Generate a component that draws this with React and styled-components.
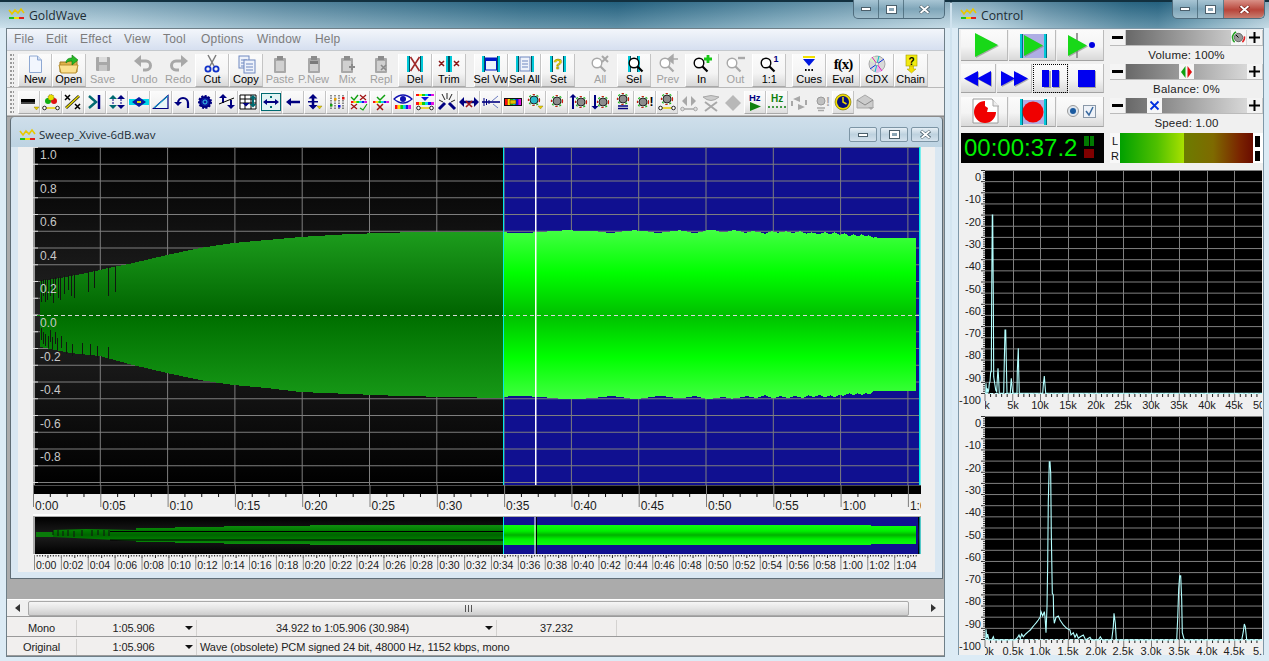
import React from 'react';
import styled, { createGlobalStyle } from 'styled-components';

const FONT = '"Liberation Sans", Arial, sans-serif';

const Global = createGlobalStyle`
  html, body { margin: 0; padding: 0; overflow: hidden; background: #a8c8d8; }
  * { box-sizing: border-box; }
`;

const Desktop = styled.div`
  width: 1269px; height: 661px; display: flex; overflow: hidden;
  font: 11px ${FONT}; color: #000;
  background: linear-gradient(180deg, #0d2b3d 0, #0d2b3d 2px, #cfe2ee 3px, #dcebf4 100%);
`;
const Glass = styled.div`
  display: flex; flex-direction: column; height: 661px;
  border-top: 2px solid #12303f;
  background:
    linear-gradient(180deg, rgba(255,255,255,0) 0, rgba(255,255,255,0) 26px, #dcebf5 26px),
    linear-gradient(180deg, rgba(10,60,90,.25) 0, rgba(255,255,255,.25) 26px),
    linear-gradient(90deg, #bcd8e6 0, #a6c8d8 12%, #6f9db3 30%, #35738f 55%, #2c6c8a 65%, #6ea0b6 82%, #b3d0de 100%);
`;
const MainWindow = styled(Glass)`width: 950px; padding: 0 5px 0 6px;`;
const ControlWindow = styled(Glass)`width: 317px; margin-left: 2px; padding: 0 5px 0 6px;`;
const TitleBar = styled.div`
  height: 26px; flex: none; display: flex; align-items: flex-start; gap: 4px;
  padding: 5px 0 0 2px; font: 12.2px "Open Sans", ${FONT}; color: #1c2c34;
  position: relative;
`;
const CaptionGroup = styled.div`
  position: absolute; top: -2px; right: ${p => p.$right}px; display: flex; height: 19px;
  border: 1px solid #4f6c7d; border-top: 0; border-radius: 0 0 5px 5px;
  background: linear-gradient(180deg, #a8c5d4, #7fa6b9 50%, #9dbccb);
`;
const CaptionBtn = styled.div`
  width: ${p => p.$w}px; display: flex; align-items: center; justify-content: center;
  border-right: 1px solid rgba(50,80,95,.6);
  background: ${p => p.$close ? 'linear-gradient(180deg,#d99187,#b8453a 55%,#c87e70)' : 'transparent'};
  &:last-child { border-right: 0; border-radius: 0 0 5px 0; }
`;
const Client = styled.div`
  height: 629px; flex: none; display: flex; flex-direction: column;
  background: #f0f0f0; border: 1px solid #6f7f88;
`;
const MenuBar = styled.div`
  height: 22px; flex: none; display: flex; align-items: center; padding: 0 0 1px 7px;
  background: linear-gradient(180deg, #f3f6fb 0, #e7edf6 40%, #d6dff0 100%);
  border-bottom: 1px solid #c4c8cc; font: 12px ${FONT}; color: #7c7c7c; letter-spacing: .2px;
`;
const MenuItem = styled.span`width: ${p => p.$w}px; flex: none;`;
const ToolRow = styled.div`
  flex: none; display: flex; height: ${p => p.$h}px; align-items: flex-start;
  padding-top: ${p => p.$top || 0}px; background: #f0f0f0; border-bottom: 1px solid #b9b9b9;
`;
const Gripper = styled.div`
  width: 4px; height: ${p => p.$h}px; margin: 0 4px 0 3px; flex: none;
  background-image: radial-gradient(circle at 1px 1px, #9a9a9a 1px, transparent 1.1px);
  background-size: 3px 4px;
`;
const ToolGroup = styled.div`display: flex; margin-left: ${p => p.$gap || 0}px; flex: none;`;
const BigBtn = styled.div`
  width: 33.83px; height: 33px; flex: none; display: flex; flex-direction: column; align-items: center;
  padding-top: 1px; font: 11px ${FONT}; white-space: nowrap; line-height: 13px;
  color: ${p => p.$off ? '#a0a0a0' : '#000'};
  ${p => p.$off ? '' : `
    background: linear-gradient(180deg, #fbfbfb 0, #f4f4f4 60%, #d8d8d8 100%);
    border-right: 1px solid #c4c4c4; border-bottom: 1px solid #a9a9a9; border-left: 1px solid #fff;
  `}
`;
const SmallBtn = styled.div`
  width: 22px; height: 23px; flex: none; display: flex; align-items: center; justify-content: center;
  ${p => p.$off ? '' : `
    background: linear-gradient(180deg, #fbfbfb 0, #f2f2f2 60%, #dcdcdc 100%);
    border-right: 1px solid #c4c4c4; border-bottom: 1px solid #a9a9a9; border-left: 1px solid #fff;
  `}
`;
const Glyph = styled.svg`display: block; flex: none; overflow: visible;`;
const BtnGlyph = styled(Glyph)`margin-bottom: 0;`;

const Mdi = styled.div`
  flex: 1; min-height: 0; display: flex; flex-direction: column; background: #ababab;
  border-top: 1px solid #8a8a8a; padding-left: 3px; padding-right: 1px;
`;
const Child = styled.div`
  height: 462px; flex: none; display: flex; flex-direction: column; border-radius: 4px 4px 0 0;
  padding: 0 7px 6px; border: 1px solid #5f6d76; border-width: 0 1px 1px 1px;
  background: linear-gradient(180deg, #cfdfeb 0, #bdd3e2 30px, #d9e7f2 30px);
`;
const ChildTitle = styled.div`
  height: 30px; flex: none; display: flex; align-items: center; gap: 3px; padding: 4px 0 0 1px;
  font: 11.5px "Open Sans", ${FONT}; color: #1c2c34; position: relative;
`;
const ChildCaps = styled.div`position: absolute; right: -4px; top: 10px; display: flex; gap: 3px;`;
const ChildCap = styled.div`
  width: 28px; height: 15px; display: flex; align-items: center; justify-content: center;
  border: 1px solid #7d95a5; border-radius: 2px;
  background: linear-gradient(180deg, #e6eff5, #bed2df 50%, #d4e2ec);
`;
const ChildClient = styled.div`
  flex: 1; min-height: 0; background: #f0f0f0; padding-left: 15px; display: flex; flex-direction: column;
`;
const Block = styled.svg`display: block; flex: none; font-family: ${FONT};`;
const Gap = styled.div`height: ${p => p.$h}px; flex: none; background: #fdfdfd; width: 888px;`;

const GrayStrip = styled.div`flex: 1; min-height: 0; background: #ababab;`;
const ScrollBar = styled.div`
  height: 18px; flex: none; display: flex; align-items: center; background: #f0f0f0;
  margin: 0 -1px 0 -3px; border-bottom: 1px solid #9a9a9a; border-top: 1px solid #fff;
`;
const ScrollArrow = styled.div`
  width: ${p => p.$w}px; flex: none; display: flex; justify-content: ${p => p.$end ? 'flex-end' : 'center'};
  padding-right: ${p => p.$end ? 8 : 0}px;
`;
const ScrollThumb = styled.div`
  flex: 1; height: 15px; border: 1px solid #a9a9a9; border-radius: 2px; display: flex;
  align-items: center; justify-content: center;
  background: linear-gradient(180deg, #f6f6f6, #e4e4e4 50%, #cdcdcd);
`;
const Grip = styled.div`
  width: 8px; height: 7px;
  background: repeating-linear-gradient(90deg, #555 0, #555 1px, transparent 1px, transparent 3px);
`;
const Status = styled.div`flex: none; padding-top: 1px; background: #f0f0f0; font: 11px ${FONT}; letter-spacing: -.1px;`;
const StatusRow = styled.div`
  height: 19px; display: flex; align-items: center; border-bottom: 1px solid #9a9a9a;
  background: #f1efee; padding-top: 2px;
`;
const Cell = styled.div`
  width: ${p => p.$w ? `${p.$w}px` : 'auto'}; flex: ${p => p.$w ? 'none' : 1}; height: 16px;
  display: flex; align-items: center; position: relative;
  justify-content: ${p => p.$left ? 'flex-start' : 'center'};
  padding-left: ${p => p.$left ? '3px' : 0}; padding-right: ${p => p.$pr || 0}px;
  border-right: ${p => p.$bare ? 0 : '1px solid #d4d2d0'}; white-space: nowrap; color: #222;
`;
const DropArrow = styled.i`
  position: absolute; right: 3px; top: 6px; width: 0; height: 0;
  border: 4px solid transparent; border-top: 4px solid #111; border-bottom: 0;
`;

/* Control */
const Panel = styled.div`
  height: 627px; flex: none; background: #f0f0f0; padding: 1px 2px 0 2px; display: flex; flex-direction: column;
  border: 1px solid #7f98a8; border-bottom: 0;
`;
const Controls = styled.div`display: flex; gap: 6px; height: 134px; flex: none;`;
const LeftCol = styled.div`width: 143px; display: flex; flex-direction: column; flex: none;`;
const RightCol = styled.div`width: 153px; display: flex; flex-direction: column; flex: none;`;
const Transport = styled.div`
  display: flex; gap: 1px; height: ${p => p.$h}px; margin-bottom: ${p => p.$mb}px; flex: none;
`;
const TBtn = styled.div`
  flex: 1; display: flex; align-items: center; justify-content: center;
  background: linear-gradient(180deg, #fbfbfb 0, #f4f4f4 55%, #d9d9d9 100%);
  border-right: 1px solid #bbb; border-bottom: 1px solid #a3a3a3;
  ${p => p.$focus ? 'outline: 1px dotted #000; outline-offset: -1px;' : ''}
`;
const Clock = styled.div`
  height: 30px; margin-top: 6px; background: #000; display: flex; align-items: center;
  padding-left: 3px; position: relative; overflow: hidden; flex: none;
`;
const Digits = styled.span`
  font: 24px ${FONT}; color: #00f000; display: block; line-height: 30px;
`;
const ClockLeds = styled.div`
  position: absolute; left: 123px; top: 3px; width: 10px; height: 22px; display: flex; flex-direction: column; gap: 3px;
`;
const LedTop = styled.div`
  height: 10px; background: linear-gradient(90deg, #007a00 0, #007a00 45%, #000 45%, #000 55%, #007a00 55%);
`;
const LedBottom = styled.div`height: 10px; background: #800000;`;
const SliderBlock = styled.div`height: 34px; flex: none; display: flex; flex-direction: column;`;
const SliderRow = styled.div`height: 16px; display: flex; flex: none; border-bottom: 1px solid #bbb;`;
const StepBtn = styled.div`
  width: 16px; flex: none; background: #f4f4f4; display: flex; align-items: center; justify-content: center;
  border-right: 1px solid #ccc;
`;
const Track = styled.div`
  flex: 1; position: relative;
  background: linear-gradient(90deg, #686868 0, #9a9a9a 45%, #d8d8d8 100%);
`;
const Thumb = styled.div`
  position: absolute; top: 0; bottom: 0; width: 15px; background: #f6f6f6;
  display: flex; align-items: center; justify-content: center;
`;
const SliderLabel = styled.div`
  height: 17px; display: flex; align-items: center; justify-content: center;
  font: 11.5px ${FONT}; letter-spacing: .2px; color: #222;
`;
const Meter = styled.div`height: 30px; margin-top: 1px; display: flex; flex: none;`;
const MeterLabels = styled.div`
  width: 10px; flex: none; background: #f8f8f8; display: flex; flex-direction: column; align-items: center;
  justify-content: space-around; font: 11px ${FONT}; line-height: 12px; color: #111;
`;
const MeterBar = styled.div`
  flex: 1; background: linear-gradient(90deg, #00a000 0, #50c000 28%, #a8e000 48%, #6c7c00 48.5%, #7e6a00 70%, #7a2400 90%, #6a0c00 100%);
`;
const MeterPeak = styled.div`
  width: 10px; flex: none; background: #fff; display: flex; flex-direction: column; gap: 4px; padding: 3px 3px 2px 2px;
`;
const PeakBit = styled.div`flex: 1; background: #000;`;

/* ---------- small drawings ---------- */
const Logo = () => (
  <Glyph width="17" height="13" viewBox="0 0 17 13">
    <polyline points="1,3 4,7 7,3 10,6 13,2 16,6" fill="none" stroke="#e8c800" strokeWidth="1.6" />
    <rect x="1" y="10" width="5" height="2" fill="#20c020" /><rect x="6" y="10" width="5" height="2" fill="#f0e000" /><rect x="11" y="10" width="5" height="2" fill="#e02020" />
  </Glyph>
);
const CapMin = ({ w = 10 }) => <Glyph width={w} height="4" viewBox="0 0 10 4"><rect x=".5" y=".5" width="9" height="3" fill="#fff" stroke="#4b5f6b" /></Glyph>;
const CapMax = () => <Glyph width="11" height="9" viewBox="0 0 11 9"><rect x=".5" y=".5" width="10" height="8" fill="#fff" stroke="#4b5f6b" /><rect x="3" y="3" width="5" height="3" fill="#8aa5b5" /></Glyph>;
const CapX = ({ stroke = '#4b5f6b' }) => (
  <Glyph width="11" height="9" viewBox="0 0 11 9">
    <path d="M1 1l9 7M10 1l-9 7" stroke={stroke} strokeWidth="3.4" /><path d="M1.5 1l8 7M9.5 1l-8 7" stroke="#fff" strokeWidth="1.8" />
  </Glyph>
);

const I = ({ children, w = 24, h = 18 }) => <BtnGlyph width={w} height={h} viewBox={`0 0 ${w} ${h}`}>{children}</BtnGlyph>;
const G = '#a8a8a8';
const Mag = ({ c = '#000', fill = '#fff', x = 9, y = 8 }) => (
  <g>
    <circle cx={x} cy={y} r="4.8" fill={fill} stroke={c} strokeWidth="1.4" />
    <path d={`M${x + 3.5} ${y + 3.5}l5 5`} stroke={c} strokeWidth="2.2" />
  </g>
);
const Bars = ({ a = 5, b = 19 }) => (
  <g>
    <rect x={a - 1} y="1" width="2" height="16" fill="#00c8d8" /><rect x={a + 1} y="1" width="1" height="16" fill="#005060" />
    <rect x={b - 1} y="1" width="2" height="16" fill="#00c8d8" /><rect x={b - 2} y="1" width="1" height="16" fill="#005060" />
  </g>
);
const Clip = ({ children }) => (
  <g>
    <rect x="6" y="3" width="12" height="15" rx="1" fill={G} />
    <rect x="9" y="1" width="6" height="4" fill="#8c8c8c" />
    <rect x="8" y="6" width="8" height="10" fill="#d0d0d0" />
    {children}
  </g>
);
const Page = ({ x = 8, y = 2, w = 9, h = 14 }) => (
  <g>
    <rect x={x} y={y} width={w} height={h} fill="#eef2fb" stroke="#6f88c0" />
    <path d={`M${x + 2} ${y + 4}h${w - 4}M${x + 2} ${y + 7}h${w - 4}M${x + 2} ${y + 10}h${w - 4}`} stroke="#6f88c0" />
  </g>
);

const BIG = [
  [[
    ['New', false, <I><path d="M6.5 1h8l4 4v12.5h-12z" fill="#f2f6fe" stroke="#8ea8d2" /><path d="M14.5 1v4h4" fill="#cfdcf2" stroke="#8ea8d2" /></I>],
    ['Open', false, <I><path d="M3 7h7l1-1h9v11H3z" fill="#e0b24a" stroke="#a07a20" /><path d="M2 10h19l-2 8H4z" fill="#fbe08e" stroke="#b88f2e" /><path d="M9 8c0-4 3-5 6-5V0l6 5-6 5V6c-2 0-4 0-6 2z" fill="#28b828" stroke="#0c7c0c" strokeWidth=".6" /></I>],
    ['Save', true, <I><rect x="5" y="2" width="14" height="14" rx="1" fill={G} /><rect x="8" y="2" width="8" height="5" fill="#dcdcdc" /><rect x="8" y="10" width="8" height="6" fill="#c6c6c6" /></I>],
  ]],
  [[
    ['Undo', true, <I><path d="M8 6h6a4.5 4.5 0 0 1 0 9h-3" fill="none" stroke={G} strokeWidth="3" /><path d="M9 0v12L2 6z" fill={G} /></I>],
    ['Redo', true, <I><path d="M16 6h-6a4.5 4.5 0 0 0 0 9h3" fill="none" stroke={G} strokeWidth="3" /><path d="M15 0v12l7-6z" fill={G} /></I>],
    ['Cut', false, <I><path d="M8 0l6 11M16 0l-6 11" stroke="#7d7d7d" strokeWidth="1.5" /><circle cx="8" cy="14" r="2.6" fill="none" stroke="#1030c8" strokeWidth="1.8" /><circle cx="16" cy="14" r="2.6" fill="none" stroke="#1030c8" strokeWidth="1.8" /></I>],
    ['Copy', false, <I><Page x={5} y={1} w={10} h={12} /><Page x={10} y={5} w={11} h={13} /></I>],
    ['Paste', true, <I><Clip /></I>],
    ['P.New', true, <I><Clip><rect x="8" y="6" width="8" height="3" fill="#7a7a7a" /></Clip></I>],
    ['Mix', true, <I><Clip><path d="M14 12h6M17 9v6" stroke="#8a8a8a" strokeWidth="2" /></Clip></I>],
    ['Repl', true, <I><Clip><path d="M12 10l5 5M17 10l-5 5" stroke="#8a8a8a" strokeWidth="1.6" /></Clip></I>],
    ['Del', false, <I><Bars /><path d="M7.5 2l9 14M16.5 2l-9 14" stroke="#a02828" strokeWidth="1.6" /></I>],
    ['Trim', false, <I><Bars a={10} b={14} /><path d="M2 6l5 5M7 6l-5 5M17 6l5 5M22 6l-5 5" stroke="#8a1818" strokeWidth="1.5" /></I>],
  ], 8],
  [[
    ['Sel Vw', false, <I><Bars a={4} b={20} /><rect x="6.5" y="3" width="11" height="12" fill="#eef2fb" stroke="#0018c8" /><rect x="6.5" y="3" width="11" height="3" fill="#0018c8" /></I>],
    ['Sel All', false, <I><Bars a={4} b={20} /><Page x={7} y={2} w={10} h={14} /></I>],
    ['Set', false, <I><Bars a={5} b={19} /><text x="12" y="14" textAnchor="middle" fontFamily={FONT} fontWeight="700" fontSize="15" fill="#e8d800" stroke="#7a7000" strokeWidth=".4">?</text></I>],
  ], 8],
  [[
    ['All', true, <I><Mag c={G} /><path d="M14 1l6 6M20 1l-6 6" stroke={G} strokeWidth="2" /></I>],
    ['Sel', false, <I><Bars a={7} b={17} /><Mag x={12} y={8} /></I>],
    ['Prev', true, <I><Mag c={G} /><path d="M14 4h8M17 0v8l-5-4z" fill={G} stroke={G} strokeWidth="1.4" /></I>],
    ['In', false, <I><Mag /><path d="M18 0v8M14 4h8" stroke="#18c818" strokeWidth="2.8" /></I>],
    ['Out', true, <I><Mag c={G} /><path d="M15 3h7" stroke={G} strokeWidth="2.4" /></I>],
    ['1:1', false, <I><Mag /><text x="19" y="7" textAnchor="middle" fontFamily={FONT} fontWeight="700" fontSize="9" fill="#000080">1</text></I>],
  ], 8],
  [[
    ['Cues', false, <I><path d="M6 2h12" stroke="#f0e000" strokeWidth="2" /><path d="M6 4h12l-6 7z" fill="#0018e0" /><path d="M8 15h1.6M11.2 15h1.6M14.4 15h1.6" stroke="#000" strokeWidth="2" /></I>],
    ['Eval', false, <I><text x="12" y="14" textAnchor="middle" fontFamily={'"Liberation Serif", serif'} fontWeight="700" fontSize="15" letterSpacing="-1" fill="#000">f(x)</text></I>],
    ['CDX', false, <I><circle cx="12" cy="9" r="8" fill="#d9d9d9" stroke="#a8a8a8" /><path d="M12 9L4.5 6A8 8 0 0 1 10 1.3z" fill="#d8f0c8" /><path d="M12 9l5 7a8 8 0 0 1-8 .5z" fill="#e8b8e8" /><path d="M7 2l10 14" stroke="#e020c0" /><path d="M5 14L19 4" stroke="#1030e0" /><path d="M14 1l-4 16" stroke="#00c8c8" /><circle cx="12" cy="9" r="1.5" fill="#fff" stroke="#777" strokeWidth=".5" /></I>],
    ['Chain', false, <I><rect x="7" y="0" width="11" height="11" fill="#f2ea10" stroke="#a09a00" strokeWidth=".6" /><text x="12.5" y="9.5" textAnchor="middle" fontFamily={FONT} fontWeight="700" fontSize="10" fill="#000">?</text><path d="M10.5 11h4v3h2.5l-4.5 4-4.5-4h2.500z" fill="#f2e000" stroke="#a09a00" strokeWidth=".5" /></I>],
  ], 6],
];

const RB = ['#ff1010', '#ffe000', '#10d010', '#00e0e0', '#1010f0', '#e010e0'];
const Rainbow = ({ x = 2, y = 10, w = 16, h = 3 }) => (
  <g>{RB.map((c, i) => <rect key={c} x={x + (i * w) / 6} y={y} width={w / 6} height={h} fill={c} />)}</g>
);
const Ends = ({ y = 15, c = '#e8d000' }) => (
  <g><path d={`M4 ${y}h12`} stroke={c} strokeWidth="1.5" /><circle cx="3.500" cy={y} r="1.8" fill="#fff" stroke="#222" /><circle cx="16.500" cy={y} r="1.8" fill="#fff" stroke="#222" /></g>
);
const Knob = ({ x = 10, y = 8, r = 4, c = '#8c8c8c', ring = true }) => (
  <g>
    {ring && <circle cx={x} cy={y} r={r + 1.5} fill="none" stroke="#10b010" strokeWidth="1.2" strokeDasharray="2 2" />}
    {ring && <circle cx={x} cy={y} r={r + 1.5} fill="none" stroke="#e01010" strokeWidth="1.2" strokeDasharray="2 6" />}
    <circle cx={x} cy={y} r={r} fill={c} stroke={ring ? '#222' : '#9a9a9a'} />
  </g>
);
const N = '#000080';
const T = '#006a70';
const Up = ({ x, y, c = N, s = 3 }) => <path d={`M${x - s} ${y + s}h${s * 2}l-${s} -${s}z`} fill={c} />;
const Dn = ({ x, y, c = N, s = 3 }) => <path d={`M${x - s} ${y}h${s * 2}l-${s} ${s}z`} fill={c} />;
const Ttx = ({ x, y, c, size = 10, children }) => <text x={x} y={y} fontFamily={FONT} fontWeight="700" fontSize={size} fill={c}>{children}</text>;
const Y = ({ x = 15, y = 14 }) => <path d={`M${x} ${y}h5l-2.5 3z`} fill="#e8d000" stroke="#807000" strokeWidth=".4" />;

const SMALL = [
  [<><rect x="2" y="6" width="14" height="3" fill="#000" /><rect x="2" y="9" width="14" height="2" fill="#444" /><Y /></>],
  [<><circle cx="7" cy="8" r="3" fill="#10b010" /><circle cx="13" cy="8" r="3" fill="#e01010" /><circle cx="10" cy="4.500" r="3" fill="#e8e000" stroke="#222" strokeDasharray="1 1" strokeWidth=".6" /><Ends /></>],
  [<><path d="M3 15L16 3" stroke="#222" strokeWidth="3" /><path d="M3 15L16 3" stroke="#e8d800" strokeWidth="1.500" /><path d="M2 2l5 5M7 2l-5 5M12 11l5 5M17 11l-5 5" stroke="#000" strokeWidth="1.500" /></>],
  [<><path d="M4 3l7 6-7 6" fill="none" stroke={T} strokeWidth="2.500" /><path d="M14 2v14" stroke={N} strokeWidth="2.500" /></>],
  [<><Up x={6} y={2} c={T} s={4} /><Dn x={6} y={12} c={T} s={4} /><Up x={14} y={2} s={4} /><Dn x={14} y={12} s={4} /><path d="M6 6v6M14 6v6" stroke={N} strokeWidth="1" strokeDasharray="2 1" /></>],
  [<><rect x="0" y="6" width="20" height="6" fill="#00d8e8" /><path d="M3 9l7-5 7 5-7 5z" fill="#0a1aa0" /><rect x="8" y="8" width="4" height="2" fill="#e8e000" /></>],
  [<><path d="M2.500 15.500L17 2.500V15.500z" fill="#e8f6f8" stroke={N} strokeWidth="1.200" /><path d="M3 15L17 3" stroke="#00b8d0" /></>],
  [<><path d="M5 10a5 5 0 1 1 10 0v5" fill="none" stroke={N} strokeWidth="2.200" /><Dn x={5} y={9} s={4} /></>],
  [<><circle cx="10" cy="9" r="6" fill={N} stroke={N} strokeWidth="2" strokeDasharray="2 1.400" /><circle cx="10" cy="9" r="4" fill="#0a1aa0" /><circle cx="10" cy="9" r="2" fill="none" stroke="#38c8e8" /></>],
  [<><Up x={6} y={1} s={4} c={N} /><path d="M6 4v6" stroke={N} strokeWidth="2" /><Dn x={14} y={12} s={4} c={N} /><path d="M14 7v6" stroke={N} strokeWidth="2" /><path d="M2 11l15-6" stroke="#000" /></>],
  [<><path d="M1 2h16v14H1zM1 6h16M1 10h16M6 2v14M12 2v14" fill="#fff" stroke="#000" /><Up x={14} y={2} c={T} s={3.500} /><Dn x={14} y={11} c={T} s={3.500} /><path d="M14 5v7" stroke={T} strokeWidth="2" /><Dn x={7} y={10} s={3.500} /></>],
  [<><rect x=".5" y=".5" width="19" height="17" fill="#e2f4f4" stroke={T} /><path d="M4 9h12" stroke={N} strokeWidth="2" /><path d="M6 6v6L2 9zM14 6v6l4-3z" fill={N} /><path d="M9 3l2 2M11 3L9 5M9 13l2 2M11 13l-2 2" stroke={T} /></>],
  [<><path d="M8 9h9" stroke={N} strokeWidth="2.500" /><path d="M8 5v8L3 9z" fill={N} /></>],
  [<><Up x={8} y={1} s={4.500} /><path d="M8 5v8" stroke={N} strokeWidth="2.500" /><rect x="3" y="8" width="10" height="1.500" fill={N} /><Dn x={8} y={12} s={4.500} /><Y x={12} y={13} /></>],
  [<><path d="M4 2v14M8 2v14M12 2v14M16 2v14" stroke="#222" strokeDasharray="1.500 1" /><rect x="3" y="11" width="2.500" height="2.500" fill="#10a010" /><rect x="7" y="5" width="2.500" height="2.500" fill="#e8a000" /><rect x="11" y="12" width="2.500" height="2.500" fill="#1010e0" /><rect x="15" y="4" width="2.500" height="2.500" fill="#e01010" /></>],
  [<><path d="M11 2l6 5M17 2l-6 5" fill="none" stroke="#a01010" strokeWidth="1.200" /><path d="M2 4l3 3 4-5" fill="none" stroke="#10a010" strokeWidth="1.400" /><Rainbow y={8} h={2} /><path d="M11 15l3 2 4-6" fill="none" stroke="#10a010" strokeWidth="1.200" /><path d="M2 11l6 5M8 11l-6 5" stroke="#a01010" strokeWidth="1.200" /></>],
  [<><path d="M6 4l3 3 5-5" fill="none" stroke="#10a010" strokeWidth="1.500" /><Rainbow y={8} h={2} /><path d="M6 11l6 6M12 11l-6 6" stroke="#a01010" strokeWidth="1.500" /></>],
  [<><path d="M1 6q9-8 18 0q-9 8-18 0z" fill="#fff" stroke="#1010b0" strokeWidth="1.200" /><circle cx="10" cy="6" r="3" fill="#1010b0" /><Rainbow x={2} y={12} w={16} h={4} /></>],
  [<><Rainbow x={1} y={1} w={18} h={2} /><path d="M6 4h8l-4 4z" fill="#1010e0" /><Rainbow x={1} y={9} w={18} h={3} /><Ends y={15} /></>],
  [<><path d="M2 16l6-6M18 16l-6-6" stroke={N} strokeWidth="3" /><path d="M5 1l3 6M10 0v6M15 1l-3 6M2 7l4 2M18 7l-4 2" stroke="#222" /></>],
  [<><path d="M3 9h14" stroke={N} strokeWidth="2.500" /><path d="M5 4v10L0 9zM15 4v10l5-5z" fill={N} /><path d="M7 8l6 6M13 8l-6 6" stroke="#a01818" strokeWidth="1.600" /></>],
  [<><path d="M1 9h18" stroke={N} strokeWidth="1.600" /><path d="M3 5v8M5.500 6v6M8 7v4" stroke={N} /><path d="M11 8l6-5M12 11l5 4" stroke="#6a7ac0" /></>],
  [<><rect x="1" y="5" width="18" height="8" fill="#111" /><Rainbow x={2} y={6} w={16} h={6} /><rect x="7" y="7" width="6" height="4" fill="#e8c000" stroke="#222" strokeWidth=".5" /></>],
  [<><Knob x={9} y={7} c="#28b8c8" /><Y x={13} y={13} /></>],
  [<Knob />],
  [<><Knob x={12} y={9} /><Up x={4} y={1} s={3.500} /><path d="M4 4v12" stroke={N} strokeWidth="2" /></>],
  [<><Knob x={12} y={9} /><Dn x={4} y={13} s={3.500} /><path d="M4 2v11" stroke={N} strokeWidth="2" /></>],
  [<><Knob y={6} /><path d="M5 13h10M5 15.500h10" stroke={N} strokeWidth="1.500" /></>],
  [<><Knob x={8} y={9} /><Ttx x={14.500} y={13} c="#000" size={12}>!</Ttx></>],
  [<><Knob y={6} /><Ends y={15} /></>],
  [<><path d="M8 2v10l-5-5zM12 2v10l5-5z" fill={G} /><path d="M4 15h12" stroke={G} strokeWidth="1.500" /><circle cx="3.500" cy="15" r="1.800" fill="#ddd" stroke={G} /><circle cx="16.500" cy="15" r="1.800" fill="#ddd" stroke={G} /></>, true],
  [<><path d="M2 3q8-3 16 0q-8 7-16 0z" fill="#ccc" stroke={G} /><path d="M4 8l12 9M16 8L4 17" stroke={G} strokeWidth="2" /></>, true],
  [<path d="M10 1l8 8-8 8-8-8z" fill="#b8b8b8" />, true],
  [<><Ttx x={4} y={8} c={N} size={9.500}>Hz</Ttx><path d="M5 9v9l11-4.500z" fill="#108010" /></>],
  [<><Ttx x={4} y={9} c="#108010" size={10}>Hz</Ttx><path d="M1 14h18" stroke="#108010" strokeDasharray="2 2" strokeWidth="1.500" /></>],
  [<><path d="M4 5l7-3v6zM16 13l-7 3v-6z" fill={G} /><path d="M3 7v5M17 6v5" stroke={G} strokeWidth="2" /></>, true],
  [<><Knob y={7} c="#c0c0c0" ring={false} /><Ttx x={15} y={12} c={G} size={12}>!</Ttx><path d="M6 14h8M7 16.500h6" stroke={G} strokeWidth="1.500" /></>, true],
  [<><circle cx="10" cy="9" r="8" fill="#f0dc00" stroke="#6a6000" strokeWidth=".6" /><circle cx="10" cy="9" r="6" fill="#08107a" /><path d="M10 4v5l3.500 2" fill="none" stroke="#f0dc00" strokeWidth="1.500" /></>],
  [<><path d="M2 6L10 1l8 5v8H2z" fill="#ccc" stroke={G} /><path d="M2 6l8 5 8-5" fill="none" stroke="#8a8a8a" /><Dn x={16} y={13} c={G} s={3} /></>, true],
];

/* ---------- wave ---------- */
const TICK = 67.3;
const gridX = Array.from({ length: 13 }, (_, i) => 33 + TICK * (i + 1));
const gridY = Array.from({ length: 21 }, (_, i) => 147.5 + 16.75 * i);
const topPts = [[27,52],[70,55],[125,52],[175,48],[210,46],[288,48],[315,50],[345,54],[365,52],[393,48],[418,46],[450,48],[470,52],[490,54],[520,50],[555,46],[580,50],[595,54],[615,52],[635,46],[660,46],[675,50],[695,50],[715,46],[730,47],[750,54],[770,49],[790,50],[810,56],[830,49],[850,53],[875,49],[895,54],[915,49],[935,56],[950,52],[970,58],[990,52],[1005,58],[1020,52],[1035,60],[1048,55],[1065,64],[1075,58],[1090,64],[1100,58],[1110,64],[1120,61],[1135,68],[1143,64],[1147,69],[1263,69]];
const botPts = [[27,200],[70,198],[125,200],[175,204],[210,208],[288,205],[315,202],[350,198],[390,203],[420,208],[450,204],[490,198],[520,200],[550,205],[570,203],[600,198],[635,207],[660,205],[685,201],[710,206],[730,204],[755,198],[785,204],[810,196],[835,205],[855,198],[880,204],[900,198],[925,204],[940,196],[955,201],[975,195],[990,203],[1005,196],[1020,202],[1035,193],[1045,198],[1062,190],[1075,195],[1088,190],[1100,195],[1112,189],[1125,193],[1135,183],[1147,183],[1263,183]];
const selPoly = [
  ...topPts.map(([x, y]) => `${(495 + x / 3).toFixed(1)},${(215 + y / 3).toFixed(1)}`),
  ...botPts.slice().reverse().map(([x, y]) => `${(495 + x / 3).toFixed(1)},${(330 + y / 3).toFixed(1)}`),
].join(' ');
const leftPoly = '40,281 60,278 87,273 113,267 133,263 167,255 200,248 233,243 267,240 300,237 350,234 400,232.500 503,232 503,398 400,396 350,394 300,392 267,388 233,385 200,380 167,373 133,365 100,356 70,353 40,347';
const slitsTop = [[41,302],[43,296],[45,302],[47,300],[50,296],[53,303],[55,290],[58,298],[60,300],[64,294],[68,290],[71,296],[74,298],[88,292],[94,288],[108,296],[115,292]];
const slitsBot = [[41,336],[43,340],[45,342],[48,344],[50,338],[52,345],[55,340],[57,346],[61,344],[66,350],[72,352],[82,351],[90,352],[97,354],[108,355]];
const ampLabels = [['1.0',155],['0.8',189],['0.6',222],['0.4',256],['0.2',289],['0.0',323],['-0.2',357],['-0.4',390],['-0.6',424],['-0.8',457]];
const envTop = x => 281 - (x - 40) * 0.19;

const WaveView = () => (
  <Block width="888" height="338" viewBox="33 147 888 338">
    <defs>
      <linearGradient id="bgUn" gradientUnits="userSpaceOnUse" x1="0" y1="147" x2="0" y2="485">
        <stop offset="0" stopColor="#000" /><stop offset=".5" stopColor="#232323" /><stop offset="1" stopColor="#000" />
      </linearGradient>
      <linearGradient id="waveUn" gradientUnits="userSpaceOnUse" x1="0" y1="232" x2="0" y2="398">
        <stop offset="0" stopColor="#1d9d1d" /><stop offset=".5" stopColor="#006400" /><stop offset=".52" stopColor="#007000" /><stop offset="1" stopColor="#179917" />
      </linearGradient>
      <linearGradient id="waveSel" gradientUnits="userSpaceOnUse" x1="0" y1="230" x2="0" y2="400">
        <stop offset="0" stopColor="#44ff44" /><stop offset=".25" stopColor="#00ff00" /><stop offset=".5" stopColor="#00c000" /><stop offset=".75" stopColor="#00ff00" /><stop offset="1" stopColor="#44ff44" />
      </linearGradient>
    </defs>
    <rect x="33" y="147" width="888" height="338" fill="url(#bgUn)" />
    <rect x="504" y="147" width="416" height="338" fill="#101090" />
    {gridX.map(x => <line key={x} x1={x} x2={x} y1="147" y2="485" stroke="#7e7e7e" />)}
    {gridY.map(y => <line key={y} x1="33" x2="921" y1={y} y2={y} stroke="#7e7e7e" />)}
    <rect x="920" y="147" width="1" height="338" fill="#f0f0f0" />
    <rect x="33" y="147" width="2" height="338" fill="#999" />
    {gridY.map(y => <line key={y} x1="33" x2="38" y1={y} y2={y} stroke="#ddd" />)}
    <polygon points={leftPoly} fill="url(#waveUn)" shapeRendering="crispEdges" />
    {slitsTop.map(([x, y]) => <line key={x} x1={x} x2={x} y1={envTop(x) - 1} y2={y} stroke="#101810" shapeRendering="crispEdges" />)}
    {slitsBot.map(([x, y]) => <line key={x} x1={x} x2={x} y1={y - 8} y2={y + 4} stroke="#101810" shapeRendering="crispEdges" />)}
    <line x1="35" x2="42" y1="315.500" y2="315.500" stroke="#18a018" />
    <polygon points={selPoly} fill="url(#waveSel)" shapeRendering="crispEdges" />
    <line x1="33" x2="920" y1="315.500" y2="315.500" stroke="#d8d8d8" strokeDasharray="4 3" />
    <rect x="503" y="147" width="1" height="338" fill="#00e8e8" />
    <rect x="919" y="147" width="1.500" height="338" fill="#00e8e8" />
    <rect x="535" y="147" width="1.500" height="338" fill="#fff" />
    {ampLabels.map(([t, y]) => <text key={t} x="40" y={y + 4} fontSize="12" fill="#c8c8c8">{t}</text>)}
  </Block>
);

const mainLabels = ['0:00','0:05','0:10','0:15','0:20','0:25','0:30','0:35','0:40','0:45','0:50','0:55','1:00','1:05'];
const Ruler = () => (
  <Block width="888" height="29" viewBox="33 485 888 29">
    <rect x="33" y="485" width="888" height="9" fill="#000" />
    <rect x="33" y="484" width="888" height="1.500" fill="#999" />
    {mainLabels.map((t, i) => {
      const x = 33.500 + TICK * i;
      return (
        <g key={t}>
          <line x1={x} x2={x} y1="485" y2="507" stroke="#7e7e7e" />
          {[1, 2, 3].map(k => <line key={k} x1={x + k * TICK / 4} x2={x + k * TICK / 4} y1="494" y2="497" stroke="#111" />)}
          <text x={x + 1.500} y="509.500" fontSize="12" fill="#1a1a1a">{t}</text>
        </g>
      );
    })}
  </Block>
);

const Overview = () => (
  <Block width="888" height="38" viewBox="33 516 888 38">
    <defs>
      <linearGradient id="ovBg" gradientUnits="userSpaceOnUse" x1="0" y1="517" x2="0" y2="554">
        <stop offset="0" stopColor="#000" /><stop offset=".5" stopColor="#1e1e1e" /><stop offset="1" stopColor="#000" />
      </linearGradient>
      <linearGradient id="ovUn" gradientUnits="userSpaceOnUse" x1="0" y1="525" x2="0" y2="545">
        <stop offset="0" stopColor="#0f8f0f" /><stop offset=".3" stopColor="#007a00" /><stop offset=".5" stopColor="#006400" /><stop offset=".7" stopColor="#007a00" /><stop offset="1" stopColor="#0f8f0f" />
      </linearGradient>
      <linearGradient id="ovSel" gradientUnits="userSpaceOnUse" x1="0" y1="525" x2="0" y2="545">
        <stop offset="0" stopColor="#10f810" /><stop offset=".3" stopColor="#00f000" /><stop offset=".5" stopColor="#00b000" /><stop offset=".7" stopColor="#00f000" /><stop offset="1" stopColor="#10f810" />
      </linearGradient>
    </defs>
    <rect x="33" y="516" width="888" height="38" fill="#aaa" />
    <rect x="35" y="517" width="885" height="37" fill="url(#ovBg)" />
    <rect x="503.500" y="517" width="414.500" height="37" fill="#101090" />
    <rect x="36" y="532" width="17" height="5" fill="#0a7a0a" />
    <polygon points="53,530 86,529 136,530 136,541 116,540 53,537" fill="url(#ovUn)" />
    <rect x="136" y="528" width="39" height="14" fill="url(#ovUn)" />
    <rect x="175" y="527" width="49" height="16" fill="url(#ovUn)" />
    <rect x="224" y="526" width="86" height="18" fill="url(#ovUn)" />
    <rect x="310" y="525" width="194" height="20" fill="url(#ovUn)" />
    <path d="M110 531.500H503M110 540H503" stroke="#000" />
    <path d="M53 530v5M58 530v6M63 531v5M68 530v6M74 531v6M82 530v6M92 530v6M98 530v5M104 530v6M109 530v6" stroke="#101010" />
    <rect x="503.500" y="525" width="367.500" height="20" fill="url(#ovSel)" />
    <rect x="871" y="526" width="45" height="18" fill="url(#ovSel)" />
    <rect x="534.500" y="517" width="1" height="37" fill="#fff" />
    <rect x="536" y="517" width="1" height="37" fill="#000" />
    <rect x="503" y="517" width="1" height="37" fill="#00e8e8" />
    <rect x="919.500" y="517" width="1" height="37" fill="#00e8e8" />
  </Block>
);

const ovLabels = Array.from({ length: 33 }, (_, i) => {
  const s = i * 2;
  return `${Math.floor(s / 60)}:${String(s % 60).padStart(2, '0')}`;
});
const OverRuler = () => (
  <Block width="888" height="18" viewBox="33 554 888 18">
    {Array.from({ length: 329 }, (_, i) => 34.500 + i * 2.688).map((x, i) => <line key={x} x1={x} x2={x} y1="555" y2={i % 5 === 0 ? 558 : 556.500} stroke="#222" />)}
    {ovLabels.map((t, i) => {
      const x = 34.500 + i * 26.88;
      return (
        <g key={t}>
          <line x1={x} x2={x} y1="555" y2="570" stroke="#8a8a8a" />
          <text x={x + 1.500} y="568.500" fontSize="10.500" fill="#1a1a1a">{t}</text>
        </g>
      );
    })}
  </Block>
);

/* ---------- spectrum ---------- */
const spec1 = [[92,670],[93,640],[95,668],[97,655],[99,668],[101,660],[103,640],[105,635],[107,605],[109,605],[110,365],[112,135],[113,135],[115,370],[116,620],[119,640],[122,660],[125,665],[127,628],[129,595],[131,630],[133,670],[146,670],[148,575],[150,480],[152,480],[154,575],[156,670],[166,670],[167,648],[169,625],[171,648],[173,670],[186,670],[187,603],[190,535],[191,603],[193,670],[263,670],[265,645],[268,618],[270,645],[272,670],[924,670]];
const spec2 = [[92,690],[93,658],[96,685],[98,672],[102,690],[110,690],[115,680],[118,690],[180,690],[188,682],[192,675],[196,685],[200,672],[205,680],[212,672],[220,665],[226,660],[232,652],[238,645],[244,638],[250,630],[256,620],[258,605],[263,618],[268,605],[270,620],[273,668],[276,590],[278,460],[280,275],[283,155],[285,155],[287,190],[289,370],[292,550],[295,555],[296,620],[298,640],[303,622],[310,618],[315,630],[325,645],[335,655],[345,660],[348,675],[355,668],[360,682],[365,672],[370,685],[376,680],[385,675],[392,690],[405,682],[410,690],[430,690],[436,680],[442,690],[470,690],[475,650],[477,610],[481,640],[484,690],[665,690],[668,625],[671,537],[674,497],[677,497],[680,570],[682,668],[688,690],[860,690],[865,665],[868,642],[871,650],[875,690],[924,690]];
const DB = ['0','-10','-20','-30','-40','-50','-60','-70','-80','-90','-100'];
const SPEC_X = [27, 55, 82, 110, 138, 165, 193, 221, 249, 276];
const SPEC_LABEL_X = [...SPEC_X, 295];

const SpecSvg = styled(Block)`margin-left: -3px;`;

const Spectrum = ({ id, points, yShift, labels, first, height }) => {
  const line = points.map(([x, y]) => `${(x / 3 - 3).toFixed(1)},${(y / 3 - yShift).toFixed(1)}`).join(' ');
  return (
    <SpecSvg width="304" height={height} viewBox={`0 0 304 ${height}`}>
      <defs><clipPath id={id}><rect x="27" y="0" width="277" height={height} /></clipPath></defs>
      <rect x="27" y="0" width="277" height="223.500" fill="#000" />
      {SPEC_X.slice(1).map(x => <line key={x} x1={x + .5} x2={x + .5} y1="0" y2="223.500" stroke="#808080" />)}
      {Array.from({ length: 21 }, (_, i) => .5 + i * 11.15).map(y => <line key={y} x1="27" x2="304" y1={y} y2={y} stroke="#808080" />)}
      {Array.from({ length: 101 }, (_, i) => i * 2.23).map((y, i) => <line key={y} x1={i % 5 === 0 ? 23 : 25} x2="27" y1={y + .5} y2={y + .5} stroke="#333" />)}
      {Array.from({ length: 51 }, (_, i) => 27 + i * 5.55).map((x, i) => <line key={x} x1={x} x2={x} y1="224" y2={i % 5 === 0 ? 231 : 227} stroke={i % 5 === 0 ? '#777' : '#222'} />)}
      <line x1="27" x2="304" y1="223.500" y2="223.500" stroke="#c8ffff" strokeDasharray="3 2" />
      <polyline points={line} fill="none" stroke="#b4ffff" strokeWidth="1.100" />
      {DB.map((t, i) => <text key={t} x="23" y={11 + i * 22.3} textAnchor="end" fontSize="11" fill="#202020">{t}</text>)}
      <g clipPath={`url(#${id})`}>
        {labels.map((t, i) => <text key={t} x={SPEC_LABEL_X[i] + (i === 0 ? first : 0)} y="239" textAnchor={i === 10 ? 'start' : 'middle'} fontSize="11" fill="#202020">{t}</text>)}
      </g>
    </SpecSvg>
  );
};
const SpecGap = styled.div`height: ${p => p.$h}px; flex: none;`;

const Tri = ({ x, w, y, h, c = '#18d818', left }) => (
  <g>
    <path d={left ? `M${x + w + 1} ${y + 1}v${h}l-${w} -${h / 2}z` : `M${x + 1} ${y + 1}v${h}l${w} -${h / 2}z`} fill="#777" opacity=".55" />
    <path d={left ? `M${x + w} ${y}v${h}l-${w} -${h / 2}z` : `M${x} ${y}v${h}l${w} -${h / 2}z`} fill={c} />
  </g>
);
const Cyan = ({ x, y = 4, h = 24 }) => <g><rect x={x} y={y} width="2" height={h} fill="#00c8d8" /><rect x={x + 2} y={y} width="1" height={h} fill="#007080" /></g>;
const Big = ({ children, w = 45, h = 30 }) => <Glyph width={w} height={h} viewBox={`0 0 ${w} ${h}`}>{children}</Glyph>;

const Slider = ({ label, left, thumb }) => (
  <SliderBlock>
    <SliderRow>
      <StepBtn><Glyph width="11" height="3" viewBox="0 0 11 3"><rect width="11" height="3" fill="#000" /></Glyph></StepBtn>
      <Track><Thumb style={{ left }}>{thumb}</Thumb></Track>
      <StepBtn><Glyph width="11" height="11" viewBox="0 0 11 11"><path d="M0 5.500h11M5.500 0v11" stroke="#000" strokeWidth="2" /></Glyph></StepBtn>
    </SliderRow>
    <SliderLabel>{label}</SliderLabel>
  </SliderBlock>
);

const MENU = [['File', 32], ['Edit', 34], ['Effect', 44], ['View', 39], ['Tool', 38], ['Options', 56], ['Window', 58], ['Help', 40]];

export default function App() {
  return (
    <Desktop>
      <Global />
      <MainWindow>
        <TitleBar>
          <Logo />GoldWave
          <CaptionGroup $right={0}>
            <CaptionBtn $w={25}><CapMin /></CaptionBtn>
            <CaptionBtn $w={25}><CapMax /></CaptionBtn>
            <CaptionBtn $w={40}><CapX /></CaptionBtn>
          </CaptionGroup>
        </TitleBar>
        <Client>
          <MenuBar>{MENU.map(([t, w]) => <MenuItem key={t} $w={w}>{t}</MenuItem>)}</MenuBar>
          <ToolRow $h={37} $top={3}>
            <Gripper $h={33} />
            {BIG.map(([group, gap], gi) => (
              <ToolGroup key={gi} $gap={gap}>
                {group.map(([label, off, icon]) => <BigBtn key={label} $off={off}>{icon}{label}</BigBtn>)}
              </ToolGroup>
            ))}
          </ToolRow>
          <ToolRow $h={28} $top={3}>
            <Gripper $h={22} />
            <ToolGroup>
              {SMALL.map(([icon, off], i) => (
                <SmallBtn key={i} $off={off}>
                  <Glyph width="20" height="18" viewBox="0 0 20 18">{icon}</Glyph>
                </SmallBtn>
              ))}
            </ToolGroup>
          </ToolRow>
          <Mdi>
            <Child>
              <ChildTitle>
                <Logo />Sweep_Xvive-6dB.wav
                <ChildCaps>
                  <ChildCap><CapMin /></ChildCap>
                  <ChildCap><CapMax /></ChildCap>
                  <ChildCap><CapX /></ChildCap>
                </ChildCaps>
              </ChildTitle>
              <ChildClient>
                <WaveView />
                <Ruler />
                <Gap $h={2} />
                <Overview />
                <OverRuler />
              </ChildClient>
            </Child>
            <GrayStrip />
            <ScrollBar>
              <ScrollArrow $w={21}><Glyph width="5" height="8" viewBox="0 0 5 8"><path d="M5 0v8L0 4z" fill="#333" /></Glyph></ScrollArrow>
              <ScrollThumb><Grip /></ScrollThumb>
              <ScrollArrow $w={35} $end><Glyph width="5" height="8" viewBox="0 0 5 8"><path d="M0 0v8l5-4z" fill="#333" /></Glyph></ScrollArrow>
            </ScrollBar>
          </Mdi>
          <Status>
            <StatusRow>
              <Cell $w={70}>Mono</Cell>
              <Cell $w={120} $pr={6}>1:05.906<DropArrow /></Cell>
              <Cell $w={300} $pr={8}>34.922 to 1:05.906 (30.984)<DropArrow /></Cell>
              <Cell $w={120}>37.232</Cell>
              <Cell $bare />
            </StatusRow>
            <StatusRow>
              <Cell $w={70}>Original</Cell>
              <Cell $w={120} $pr={6}>1:05.906<DropArrow /></Cell>
              <Cell $left $bare>Wave (obsolete) PCM signed 24 bit, 48000 Hz, 1152 kbps, mono</Cell>
            </StatusRow>
          </Status>
        </Client>
      </MainWindow>

      <ControlWindow>
        <TitleBar>
          <Logo />Control
          <CaptionGroup $right={-1}>
            <CaptionBtn $w={25}><CapMin /></CaptionBtn>
            <CaptionBtn $w={26}><CapMax /></CaptionBtn>
            <CaptionBtn $w={40} $close><CapX stroke="#7a2018" /></CaptionBtn>
          </CaptionGroup>
        </TitleBar>
        <Panel>
          <Controls>
            <LeftCol>
              <Transport $h={31} $mb={3}>
                <TBtn><Big><Tri x={13} y={3} w={23} h={24} /></Big></TBtn>
                <TBtn>
                  <Big>
                    <rect x="11" y="4" width="24" height="24" fill="#aeaee4" />
                    <Cyan x={10} /><Cyan x={34} />
                    <Tri x={14} y={5} w={19} h={21} />
                  </Big>
                </TBtn>
                <TBtn>
                  <Big>
                    <rect x="18" y="3" width="2" height="25" fill="#9a9a9a" />
                    <Tri x={10} y={5} w={19} h={21} />
                    <circle cx="34" cy="15" r="3" fill="#0000e0" />
                  </Big>
                </TBtn>
              </Transport>
              <Transport $h={29} $mb={4}>
                <TBtn><Big w={34} h={29}><Tri x={3} y={7} w={14} h={15} c="#0000f0" left /><Tri x={16} y={7} w={14} h={15} c="#0000f0" left /></Big></TBtn>
                <TBtn><Big w={34} h={29}><Tri x={4} y={7} w={14} h={15} c="#0000f0" /><Tri x={17} y={7} w={14} h={15} c="#0000f0" /></Big></TBtn>
                <TBtn $focus><Big w={34} h={29}><rect x="11" y="7" width="7" height="17" fill="#777" opacity=".6" /><rect x="20" y="7" width="7" height="17" fill="#777" opacity=".6" /><rect x="9" y="6" width="7" height="17" fill="#0000f0" /><rect x="19" y="6" width="7" height="17" fill="#0000f0" /></Big></TBtn>
                <TBtn><Big w={34} h={29}><rect x="10" y="7" width="17" height="17" fill="#777" opacity=".6" /><rect x="9" y="6" width="17" height="17" fill="#0000f0" /></Big></TBtn>
              </Transport>
              <Transport $h={30} $mb={0}>
                <TBtn>
                  <Big>
                    <path d="M11 2h19l6 7v17H11z" fill="#fff" stroke="#9a9a9a" />
                    <path d="M31 3v6h6" fill="#eee" stroke="#aaa" />
                    <path d="M23 4a11 11 0 1 0 11 11h-9l1-4-3-2z" fill="#f00000" />
                  </Big>
                </TBtn>
                <TBtn>
                  <Big>
                    <rect x="11" y="3" width="24" height="24" fill="#aeaee4" />
                    <Cyan x={10} y={2} h={26} /><Cyan x={34} y={2} h={26} />
                    <circle cx="23" cy="15" r="10.500" fill="#f00000" />
                  </Big>
                </TBtn>
                <TBtn>
                  <Big>
                    <circle cx="15" cy="14" r="5.500" fill="#dfe6ee" stroke="#9a9a9a" />
                    <circle cx="15" cy="14" r="3" fill="#1a5aa0" />
                    <rect x="25.500" y="8.500" width="12" height="12" fill="#eef2f8" stroke="#8a98a8" />
                    <path d="M28 14l3 4 4-8" fill="none" stroke="#3a6aa0" strokeWidth="1.500" />
                  </Big>
                </TBtn>
              </Transport>
              <Clock>
                <Digits>00:00:37.2</Digits>
                <ClockLeds><LedTop /><LedBottom /></ClockLeds>
              </Clock>
            </LeftCol>
            <RightCol>
              <Slider label="Volume: 100%" left="105px" thumb={
                <Glyph width="15" height="15" viewBox="0 0 15 15"><circle cx="7.500" cy="7.500" r="6" fill="none" stroke="#20a020" strokeWidth="1.500" strokeDasharray="12 26" transform="rotate(130 7.500 7.500)" /><circle cx="7.500" cy="7.500" r="6" fill="none" stroke="#e02020" strokeWidth="1.500" strokeDasharray="6 32" transform="rotate(-10 7.500 7.500)" /><circle cx="7.500" cy="7.500" r="4.200" fill="#999" stroke="#333" strokeWidth=".6" /><path d="M7.500 7.500L5 5" stroke="#000" /></Glyph>
              } />
              <Slider label="Balance: 0%" left="53px" thumb={
                <Glyph width="13" height="14" viewBox="0 0 13 14"><path d="M5.500 1v12L1 7z" fill="#10a010" /><path d="M7.500 1v12L12 7z" fill="#e01010" /></Glyph>
              } />
              <Slider label="Speed: 1.00" left="21px" thumb={
                <Glyph width="11" height="11" viewBox="0 0 11 11"><path d="M1.500 1.500l8 8M9.500 1.500l-8 8" stroke="#0030e0" strokeWidth="1.800" /></Glyph>
              } />
              <Meter>
                <MeterLabels><span>L</span><span>R</span></MeterLabels>
                <MeterBar />
                <MeterPeak><PeakBit /><PeakBit /></MeterPeak>
              </Meter>
            </RightCol>
          </Controls>
          <SpecGap $h={6} />
          <Spectrum id="specA" points={spec1} yShift={0} height={246} first={2}
            labels={['k','5k','10k','15k','20k','25k','30k','35k','40k','45k','50']} />
          <Spectrum id="specB" points={spec2} yShift={6} height={239} first={3}
            labels={['0k','0.5k','1.0k','1.5k','2.0k','2.5k','3.0k','3.5k','4.0k','4.5k','5.0']} />
        </Panel>
      </ControlWindow>
    </Desktop>
  );
}
